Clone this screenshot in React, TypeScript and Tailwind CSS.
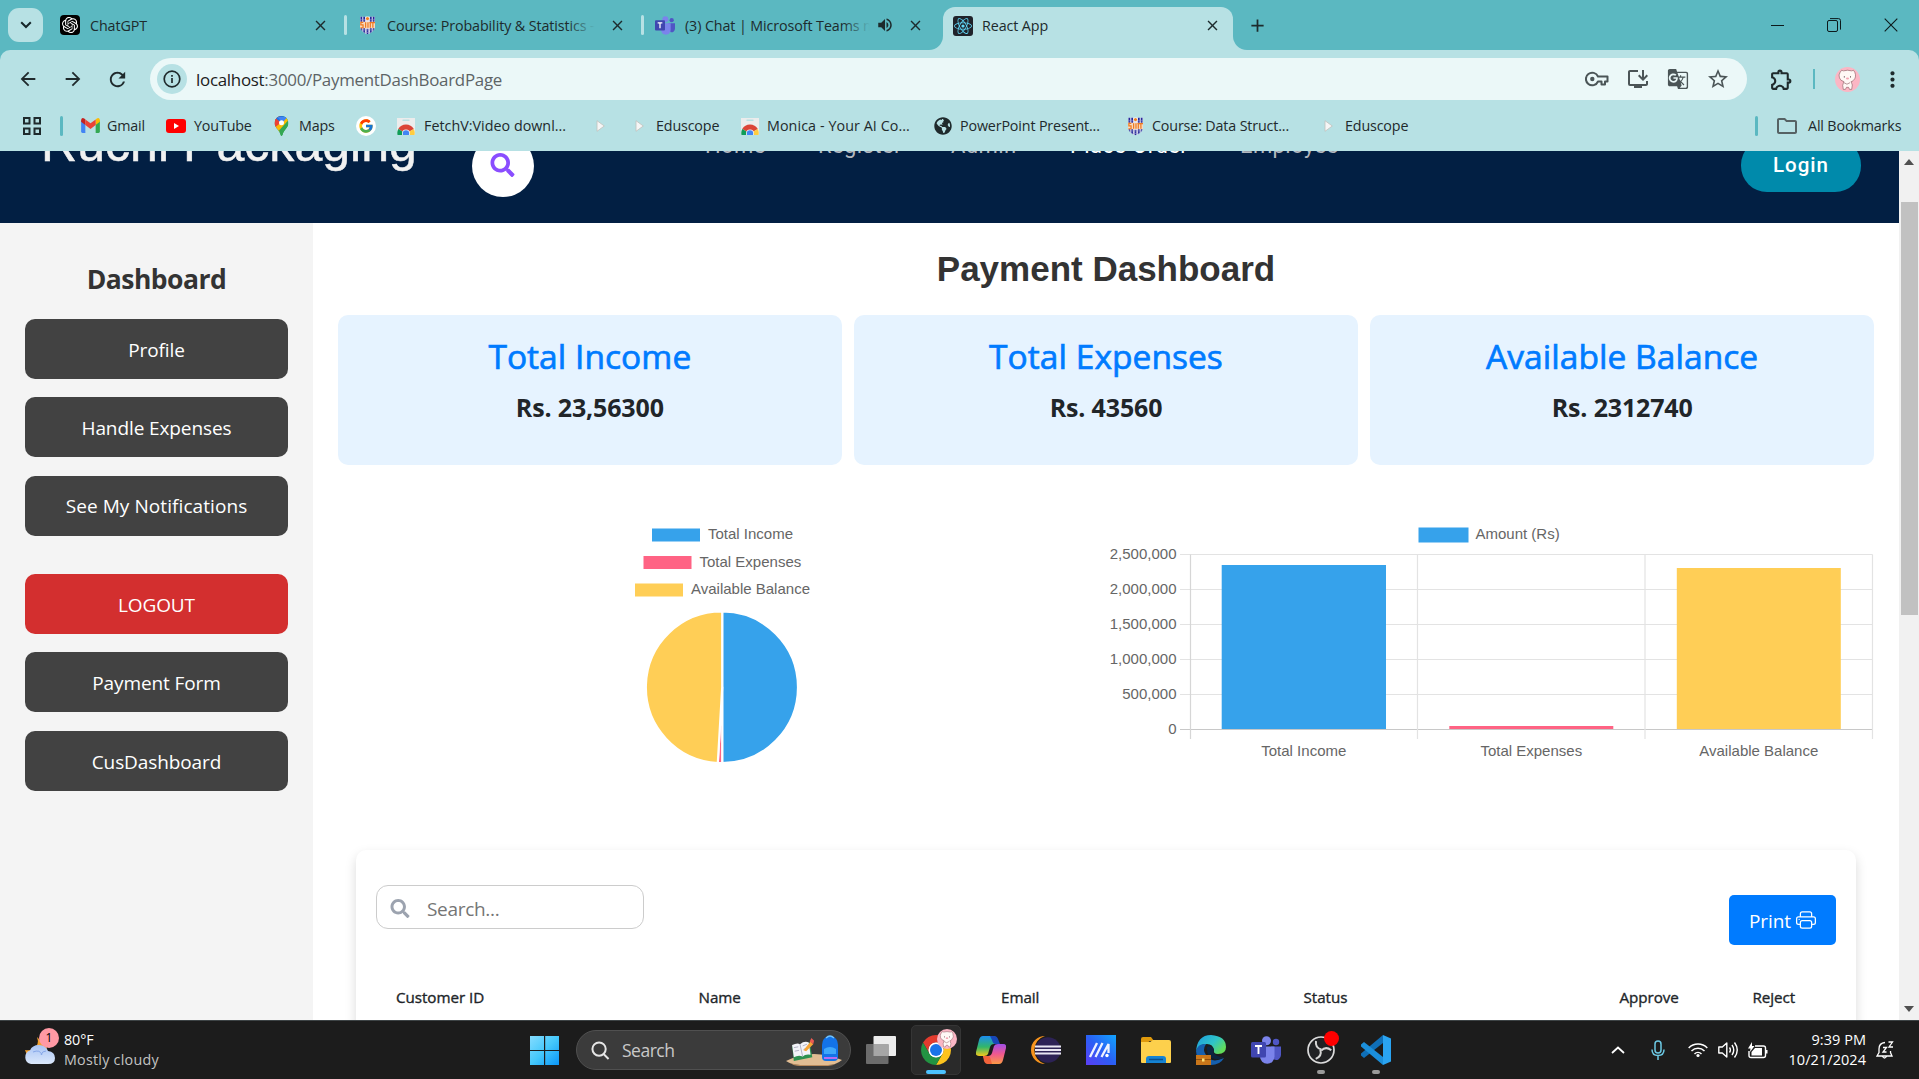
import React from "react";
import {
  MdArrowBack,
  MdArrowForward,
  MdRefresh,
  MdStarBorder,
  MdOutlineExtension,
  MdInstallDesktop,
  MdGTranslate,
  MdMoreVert,
  MdVolumeUp,
  MdClose,
  MdAdd,
  MdOutlineFolder,
} from "react-icons/md";
import { FaSearch, FaReact, FaGlobeAmericas } from "react-icons/fa";
import { BsPrinter } from "react-icons/bs";
import { SiOpenai } from "react-icons/si";
import { FcGoogle } from "react-icons/fc";

/* ---------- small drawings ---------- */

function ChromeLogo({ className }: { className: string }) {
  const arm = "M24 12H44.78A24 24 0 0 0 3.22 12L13.61 30A12 12 0 0 1 24 12Z";
  return (
    <svg viewBox="0 0 48 48" className={className}>
      <circle cx="24" cy="24" r="12" fill="#fff" />
      <path d={arm} fill="#e33b2e" />
      <path d={arm} fill="#fcc31e" transform="rotate(120 24 24)" />
      <path d={arm} fill="#229342" transform="rotate(240 24 24)" />
      <circle cx="24" cy="24" r="12" fill="#fff" />
      <circle cx="24" cy="24" r="9.6" fill="#1a73e8" />
    </svg>
  );
}

function WebStore() {
  return (
    <svg viewBox="0 0 20 20" className="h-[20px] w-[20px]">
      <path d="M1 2h18v15.500q0 1.500-1.500 1.500h-15q-1.500 0-1.500-1.500z" fill="#ececec" />
      <path d="M7 4.200h6" stroke="#b7e1e4" strokeWidth="1.400" strokeLinecap="round" />
      <clipPath id="ws"><path d="M1 2h18v17H1z" /></clipPath>
      <g clipPath="url(#ws)">
        <path d="M10 17.500L2.200 13A9 9 0 0 1 17.800 13z" fill="#db4437" />
        <path d="M10 17.500L2.200 13A9 9 0 0 0 3 22z" fill="#0f9d58" />
        <path d="M10 17.500L17.800 13A9 9 0 0 1 17 22z" fill="#ffcd40" />
        <circle cx="10" cy="17.500" r="4" fill="#f1f1f1" />
        <circle cx="10" cy="17.500" r="3.200" fill="#4285f4" />
      </g>
    </svg>
  );
}

function Crest() {
  return (
    <svg viewBox="0 0 18 20" className="h-[20px] w-[17px]">
      <clipPath id="crest"><path d="M1 1h16v12q-2 5-8 7q-6-2-8-7z" /></clipPath>
      <g clipPath="url(#crest)">
        <rect width="18" height="20" fill="#e8e8f2" />
        <path d="M2.500 0v20M5.500 0v20M12.500 0v20M15.500 0v20M9 14v6" stroke="#25299a" strokeWidth="1.900" />
        <path d="M0 4.500h18M0 15.200h18M0 17.800h18" stroke="#9a9cd0" strokeWidth=".7" />
        <rect x="7" y="0" width="4" height="5" fill="#fff" />
        <circle cx="9" cy="3.200" r="1.700" fill="#f08020" />
        <rect y="6.500" width="18" height="7" fill="#f8d9bd" />
        <path d="M4.500 7.300H2v2.600h2.300v3H1.500M7 7v6M9.500 7v6M12 7v6M11 7.500h6M14.700 7v6" stroke="#ee7a22" strokeWidth="1.300" fill="none" />
      </g>
    </svg>
  );
}

function TeamsLogo({ className }: { className: string }) {
  return (
    <svg viewBox="0 0 30 28" className={className}>
      <circle cx="25" cy="6" r="3.200" fill="#4f56c4" />
      <path d="M20 10.500h10v8.500a5 5 0 0 1-7 4.600z" fill="#4f56c4" />
      <circle cx="15.500" cy="4.700" r="4.500" fill="#7b83eb" />
      <path d="M9 10.500h14.500v10a7.250 7.250 0 0 1-14.500 0z" fill="#7b83eb" />
      <rect x="0" y="6" width="15" height="15.500" rx="1.500" fill="#4046b0" />
      <path d="M4 10h7M7.500 10v8" stroke="#fff" strokeWidth="1.900" />
    </svg>
  );
}

function Triangle() {
  return (
    <svg viewBox="0 0 9 12" className="h-[12px] w-[9px]">
      <path d="M1 .7L8.300 6 1 11.300z" fill="#f6f6f6" stroke="#c2c2bd" strokeWidth=".8" />
    </svg>
  );
}

function Pig({ className }: { className: string }) {
  return (
    <svg viewBox="0 0 24 24" className={className}>
      <circle cx="12" cy="12" r="12" fill="#fbb6c4" />
      <path d="M5 5q1-3 3.200-1.300Q12 2.500 16 3.700q2-1.700 3 1.300 2 5-1.500 8-1 1-2 1 2 3 .5 7.500h-2l-1-2h-2l-1 2H8q-1.500-4 .5-7.500-3-.5-4.200-3.500T5 5z" fill="#fff8f5" stroke="#8a5a60" strokeWidth=".6" />
      <path d="M8.500 9.500h.8M14.500 9.500h.8" stroke="#443036" strokeWidth="1.200" />
      <ellipse cx="12" cy="11" rx="1.500" ry="1" fill="#f5a7b5" />
      <path d="M8.500 15l3 1.500 3-1.500" stroke="#8a5a60" strokeWidth=".6" fill="none" />
    </svg>
  );
}

function Gmail() {
  return (
    <svg viewBox="0 0 20 16" className="h-[15px] w-[19px]">
      <path d="M0 2.500V14.500q0 1.500 1.400 1.500H4.500V6z" fill="#4285f4" />
      <path d="M20 2.500V14.500q0 1.500-1.400 1.500H15.500V6z" fill="#34a853" />
      <path d="M15.500 1.500v6L20 4V2q-.6-2.800-3.300-1.500z" fill="#fbbc04" />
      <path d="M4.500 1.500v6L0 4V2Q.6-.8 3.300.5z" fill="#c5221f" />
      <path d="M4.500 7.500V1.500L10 5.700l5.500-4.200v6L10 11.700z" fill="#ea4335" />
    </svg>
  );
}

function MapsPin() {
  return (
    <svg viewBox="0 0 14 20" className="h-[20px] w-[15px]">
      <clipPath id="pin"><path d="M7 0a7 7 0 0 1 7 7c0 4.500-4.800 6.500-6 12q-1 2-2 0C4.800 13.500 0 11.500 0 7a7 7 0 0 1 7-7z" /></clipPath>
      <g clipPath="url(#pin)">
        <rect width="14" height="20" fill="#34a853" />
        <path d="M0 0h8L2 8 0 10z" fill="#ea4335" />
        <path d="M0 2l2 0 5 5-5 6-3-2z" fill="#ea4335" />
        <path d="M2 0h12L7 7 1.500 2.500z" fill="#1a73e8" />
        <path d="M14 5L5 16 1 11 12 2z" fill="#fbbc04" />
        <path d="M14 4v9L7 20 4.500 14.500z" fill="#34a853" />
        <path d="M3 1h9.500L8 7z" fill="#4285f4" />
      </g>
      <circle cx="7" cy="6.800" r="2.500" fill="#fff" />
    </svg>
  );
}

/* ---------- browser chrome ---------- */

function TabBar() {
  return (
    <div className="flex h-[50px] items-center bg-[#5bb8c1] text-[14.300px] tracking-[-0.1px] text-[#1d2b2d]">
      <div className="ml-[8px] flex h-[34px] w-[35px] items-center justify-center rounded-[11px] bg-[#b7e1e4]">
        <svg viewBox="0 0 12 8" className="h-[8px] w-[12px]">
          <path d="M1.200 1.200L6 6l4.800-4.800" fill="none" stroke="#16272a" strokeWidth="2" />
        </svg>
      </div>
      <div className="flex w-[301px] items-center pl-[17px]">
        <span className="flex h-[20px] w-[20px] items-center justify-center rounded-[4px] bg-black">
          <SiOpenai className="h-[16px] w-[16px] text-white" />
        </span>
        <span className="ml-[10px] w-[222px] pt-px">ChatGPT</span>
        <MdClose className="h-[17px] w-[17px]" />
      </div>
      <div className="h-[20px] w-[3px] rounded bg-[#b7e1e4]" />
      <div className="flex w-[294px] items-center pl-[12px]">
        <Crest />
        <span className="relative ml-[11px] w-[208px] overflow-hidden whitespace-nowrap pt-px">
          Course: Probability &amp; Statistics -
          <span className="absolute right-0 top-0 h-full w-[28px] bg-linear-to-r from-transparent to-[#5bb8c1]" />
        </span>
        <MdClose className="ml-[14px] h-[17px] w-[17px]" />
      </div>
      <div className="h-[20px] w-[3px] rounded bg-[#b7e1e4]" />
      <div className="flex w-[299px] items-center pl-[11px]">
        <TeamsLogo className="h-[19px] w-[20px]" />
        <span className="relative ml-[10px] w-[185px] overflow-hidden whitespace-nowrap pt-px">
          (3) Chat | Microsoft Teams meeting
          <span className="absolute right-0 top-0 h-full w-[28px] bg-linear-to-r from-transparent to-[#5bb8c1]" />
        </span>
        <MdVolumeUp className="ml-[6px] h-[18px] w-[18px]" />
        <MdClose className="ml-[13px] h-[17px] w-[17px]" />
      </div>
      <div className="relative mt-[7px] flex h-[43px] w-[290px] items-center rounded-t-[12px] bg-[#b7e1e4] pb-[6px] pl-[10px]">
        <span className="absolute bottom-0 left-[-14px] h-[14px] w-[14px] bg-[#b7e1e4]">
          <span className="block h-full w-full rounded-br-[14px] bg-[#5bb8c1]" />
        </span>
        <span className="absolute bottom-0 right-[-14px] h-[14px] w-[14px] bg-[#b7e1e4]">
          <span className="block h-full w-full rounded-bl-[14px] bg-[#5bb8c1]" />
        </span>
        <span className="flex h-[20px] w-[20px] items-center justify-center rounded-[3px] bg-[#20232a]">
          <FaReact className="h-[18px] w-[18px] text-[#61dafb]" />
        </span>
        <span className="ml-[9px] w-[222px]">React App</span>
        <MdClose className="h-[17px] w-[17px]" />
      </div>
      <MdAdd className="ml-[14px] h-[21px] w-[21px]" />
      <div className="ml-auto flex items-center gap-[43px] pr-[21px]">
        <span className="h-px w-[13px] bg-[#0c1a1c]" />
        <svg viewBox="0 0 14 14" className="h-[14px] w-[14px]" fill="none" stroke="#0c1a1c">
          <rect x=".5" y="2.500" width="10" height="11" rx="1.500" />
          <path d="M3 .6h8.500q2 0 2 2v9" />
        </svg>
        <svg viewBox="0 0 14 14" className="h-[14px] w-[14px]" fill="none" stroke="#0c1a1c" strokeWidth="1.100">
          <path d="M.7.7l12.600 12.600M13.300.7L.7 13.300" />
        </svg>
      </div>
    </div>
  );
}

function AddressBar() {
  return (
    <div className="bg-[#5bb8c1]">
      <div className="flex h-[50px] items-center rounded-t-[10px] bg-[#b7e1e4] pt-[8px] text-[#1f2a2c]">
        <MdArrowBack className="ml-[17px] h-[22px] w-[22px]" />
        <MdArrowForward className="ml-[23px] h-[22px] w-[22px]" />
        <MdRefresh className="ml-[22px] h-[23px] w-[23px]" />
        <div className="ml-[21px] flex h-[42px] w-[1597px] items-center rounded-full bg-[#ebf8f8] pl-[7px]">
          <span className="flex h-[30px] w-[30px] items-center justify-center rounded-full bg-[#b7e1e4]">
            <svg viewBox="0 0 18 18" className="h-[18px] w-[18px]" fill="none" stroke="#1f2a2c" strokeWidth="1.700">
              <circle cx="9" cy="9" r="7.800" />
              <path d="M9 8v5M9 5v1.700" />
            </svg>
          </span>
          <span className="ml-[9px] w-[1389px] pt-[2px] text-[16.900px] tracking-[-0.27px] text-[#5d6466]">
            <span className="text-[#1b2021]">localhost</span>:3000/PaymentDashBoardPage
          </span>
          <svg viewBox="0 0 24 16" className="h-[16px] w-[24px]" fill="none" stroke="#4b5557" strokeWidth="2">
            <path d="M13 5.500a6.300 6.300 0 1 0 0 5h3.500v3h3.500v-3h2.500v-5z" strokeLinejoin="round" />
            <circle cx="7.300" cy="8" r="2.200" fill="#4b5557" stroke="none" />
          </svg>
          <MdInstallDesktop className="ml-[17px] h-[24px] w-[24px] text-[#4b5557]" />
          <MdGTranslate className="ml-[17px] h-[22px] w-[22px] text-[#4b5557]" />
          <MdStarBorder className="ml-[17px] h-[24px] w-[24px] text-[#4b5557]" />
        </div>
        <MdOutlineExtension className="ml-[22px] h-[25px] w-[25px]" />
        <span className="ml-[19px] h-[20px] w-[2px] bg-[#5bb8c1]" />
        <Pig className="ml-[20px] h-[25px] w-[25px]" />
        <MdMoreVert className="ml-[20px] h-[25px] w-[25px]" />
      </div>
    </div>
  );
}

function Mark({ icon, label, className, gap }: { icon: React.ReactNode; label?: string; className: string; gap?: string }) {
  return (
    <div className={`flex shrink-0 items-center whitespace-nowrap ${className}`}>
      <span className="flex w-[20px] shrink-0 items-center justify-center">{icon}</span>
      {label && <span className={gap ?? "ml-[8px]"}>{label}</span>}
    </div>
  );
}

function BookmarksBar() {
  return (
    <div className="flex h-[51px] items-center bg-[#b7e1e4] text-[14.300px] tracking-[-0.15px] text-[#1f2a2c]">
      <svg viewBox="0 0 18 18" className="ml-[23px] h-[18px] w-[18px]" fill="none" stroke="#1f2a2c" strokeWidth="2">
        <path d="M1 1h5.500v5.500H1zM11.500 1H17v5.500h-5.500zM1 11.500h5.500V17H1zM11.500 11.500H17V17h-5.500z" />
      </svg>
      <span className="ml-[19px] h-[20px] w-[3px] rounded bg-[#5bb8c1]" />
      <Mark className="ml-[17px] w-[86px]" icon={<Gmail />} label="Gmail" gap="ml-[7px]" />
      <Mark
        className="w-[105px]"
        icon={
          <svg viewBox="0 0 20 14" className="h-[14px] w-[20px]">
            <rect width="20" height="14" rx="3" fill="#f00" />
            <path d="M8 4l5 3-5 3z" fill="#fff" />
          </svg>
        }
        label="YouTube"
      />
      <Mark className="w-[85px]" icon={<MapsPin />} label="Maps" />
      <Mark
        className="w-[40px]"
        icon={
          <span className="flex h-[20px] w-[20px] items-center justify-center rounded-full bg-white">
            <FcGoogle className="h-[16px] w-[16px]" />
          </span>
        }
      />
      <Mark className="w-[194px] tracking-[0.02px]" icon={<WebStore />} label="FetchV:Video downl..." />
      <Mark className="w-[39px]" icon={<Triangle />} />
      <Mark className="w-[111px]" icon={<Triangle />} label="Eduscope" gap="ml-[7px]" />
      <Mark className="w-[193px] tracking-[0.08px]" icon={<WebStore />} label="Monica - Your AI Co..." gap="ml-[7px]" />
      <Mark className="w-[192px]" icon={<FaGlobeAmericas className="h-[18px] w-[18px]" />} label="PowerPoint Present..." gap="ml-[7px]" />
      <Mark className="w-[193px]" icon={<Crest />} label="Course: Data Struct..." gap="ml-[7px]" />
      <Mark className="w-[111px]" icon={<Triangle />} label="Eduscope" gap="ml-[7px]" />
      <span className="ml-auto h-[20px] w-[3px] rounded bg-[#5bb8c1]" />
      <Mark
        className="ml-[19px] w-[142px]"
        icon={<MdOutlineFolder className="h-[24px] w-[24px] shrink-0 text-[#566264]" />}
        label="All Bookmarks"
        gap="ml-[11px]"
      />
    </div>
  );
}

/* ---------- page ---------- */

function SiteNav() {
  return (
    <div className="h-[72px] overflow-hidden bg-[#021f43]">
      <div className="-mt-[50px] flex items-start whitespace-nowrap font-['Roboto']">
        <span className="ml-[41px] mt-[13px] w-[431px] font-['Liberation_Sans'] text-[50px] leading-[60px] tracking-[0.05px] text-[#f1f1f1] [-webkit-text-stroke:0.5px_#f1f1f1]">
          Ruchi Packaging
        </span>
        <span className="mt-[34px] flex h-[62px] w-[62px] items-center justify-center rounded-full bg-white">
          <FaSearch className="mb-[2px] mr-[2px] h-[24px] w-[25px] text-[#8a4dff]" />
        </span>
        <div className="ml-[171px] mt-[30px] flex text-[22px] leading-[30px] tracking-[0.4px] text-[#b3b7bf]">
          <span className="w-[113px]">Home</span>
          <span className="w-[133px]">Register</span>
          <span className="w-[119px]">Admin</span>
          <span className="w-[170px] text-white">Place Order</span>
          <span>Employee</span>
        </div>
        <span className="ml-auto mr-[38px] mt-[38px] flex h-[53px] w-[120px] items-center justify-center rounded-[26px] bg-[#008aab] text-[20.500px] font-medium tracking-[1px] text-white">
          Login
        </span>
      </div>
    </div>
  );
}

const sideButton =
  "flex h-[60px] w-[263px] items-center justify-center rounded-[10px] bg-[#424242] pt-[2px] text-[19px] tracking-[-0.1px] text-white";

function Sidebar() {
  return (
    <div className="flex w-[313px] shrink-0 flex-col items-center bg-[#f4f4f4] pt-[39px]">
      <h2 className="mb-[22px] text-[26.500px] font-bold leading-[35px] tracking-[-0.5px] text-[#333]">Dashboard</h2>
      <div className="flex flex-col gap-[18.300px]">
        <div className={sideButton}>Profile</div>
        <div className={sideButton}>Handle Expenses</div>
        <div className={sideButton}><span className="tracking-[0.08px]">See My Notifications</span></div>
      </div>
      <div className="mt-[38.400px] flex flex-col gap-[18.400px]">
        <div className="flex h-[60px] w-[263px] items-center justify-center rounded-[10px] bg-[#d32f2f] pt-[2px] text-[19px] tracking-[-0.1px] text-white">
          LOGOUT
        </div>
        <div className={sideButton}>Payment Form</div>
        <div className={sideButton}>CusDashboard</div>
      </div>
    </div>
  );
}

function SummaryCard({ title, value }: { title: string; value: string }) {
  return (
    <div className="h-[150px] rounded-[10px] bg-[#e6f3ff] pt-[20px] text-center">
      <h3 className="text-[33.500px] leading-[43px] tracking-[0.05px] text-[#007bff] [-webkit-text-stroke:0.7px_#007bff]">{title}</h3>
      <p className="mt-[11px] text-[25px] font-bold leading-[37px] tracking-[-0.15px] text-[#212529]">{value}</p>
    </div>
  );
}

function PieChart() {
  const rows = [
    { x: 652, y: 528.5, label: "Total Income", fill: "#36a2eb" },
    { x: 643.5, y: 556, label: "Total Expenses", fill: "#ff6384" },
    { x: 635, y: 583.5, label: "Available Balance", fill: "#ffce56" },
  ];
  return (
    <svg viewBox="338 465 768 385" className="h-[385px] w-[768px] shrink-0 font-['Liberation_Sans']">
      {rows.map((r) => (
        <g key={r.label}>
          <rect x={r.x} y={r.y} width="48" height="13" fill={r.fill} />
          <text x={r.x + 56} y={r.y + 10.8} fontSize="15" fill="#666">{r.label}</text>
        </g>
      ))}
      <g stroke="#fff" strokeWidth="2.200" strokeLinejoin="round">
        <path d="M722.200 687.300V611.500A75.800 75.800 0 0 1 722.200 763.100Z" fill="#36a2eb" />
        <path d="M722.200 687.300V763.100A75.800 75.800 0 0 1 717.800 763Z" fill="#ff6384" />
        <path d="M722.200 687.300L717.800 763A75.800 75.800 0 0 1 722.200 611.500Z" fill="#ffce56" />
      </g>
    </svg>
  );
}

function BarChart() {
  const ticks = ["2,500,000", "2,000,000", "1,500,000", "1,000,000", "500,000", "0"];
  return (
    <svg viewBox="1106 465 768 385" className="h-[385px] w-[768px] shrink-0 font-['Liberation_Sans']">
      <rect x="1418.500" y="527.500" width="50" height="15" fill="#36a2eb" />
      <text x="1475.500" y="539.300" fontSize="15" fill="#666">Amount (Rs)</text>
      {ticks.map((t, i) => (
        <g key={t}>
          <path d={`M1180 ${554.5 + i * 35}H1872.5`} stroke={i === 5 ? "#c8c8c8" : "#e3e3e3"} strokeWidth="1.200" />
          <text x="1176.500" y={558.8 + i * 35} fontSize="15" fill="#666" textAnchor="end">{t}</text>
        </g>
      ))}
      <path d="M1417.500 554.500V739M1645 554.500V739M1872.500 554.500V739" stroke="#e3e3e3" strokeWidth="1.200" />
      <path d="M1190.500 554.500V739" stroke="#d6d6d6" strokeWidth="1.200" />
      <rect x="1221.700" y="565" width="164.300" height="164" fill="#36a2eb" />
      <rect x="1449.300" y="726" width="164" height="3" fill="#ff6384" />
      <rect x="1676.800" y="568" width="164" height="161" fill="#ffce56" />
      <g fontSize="15" fill="#666" textAnchor="middle">
        <text x="1303.800" y="756.300">Total Income</text>
        <text x="1531.300" y="756.300">Total Expenses</text>
        <text x="1758.800" y="756.300">Available Balance</text>
      </g>
    </svg>
  );
}

function CustomerTable() {
  return (
    <div className="mx-[18px] h-[220px] rounded-[10px] bg-white px-[20px] shadow-[0_5px_12px_rgba(0,0,0,0.15)]">
      <div className="flex justify-between">
        <div className="mt-[35px] flex h-[44px] w-[268px] items-center rounded-[12px] border border-[#ccc] pl-[13px]">
          <FaSearch className="mt-[2px] h-[19px] w-[20px] text-[#9ca3af]" />
          <span className="ml-[17px] mt-[5px] text-[19px] tracking-[-0.3px] text-[#757575]">Search...</span>
        </div>
        <div className="mt-[45px] flex h-[50px] w-[107px] items-center justify-center gap-[5px] rounded-[5px] bg-[#007bff] text-[19px] tracking-[-0.1px] text-white">
          <span className="pt-[2px]">Print</span> <BsPrinter className="h-[20px] w-[20px]" />
        </div>
      </div>
      <div className="mt-[41px] flex pl-[20px] text-[15.200px] leading-[22px] tracking-[-0.05px] text-[#212529] [-webkit-text-stroke:0.35px_#212529]">
        <span className="w-[302.500px]">Customer ID</span>
        <span className="w-[302.500px]">Name</span>
        <span className="w-[302.500px]">Email</span>
        <span className="w-[316px]">Status</span>
        <span className="w-[133px]">Approve</span>
        <span>Reject</span>
      </div>
    </div>
  );
}

function ScrollBar() {
  return (
    <div className="flex w-[20px] shrink-0 flex-col items-center bg-[#f1f1f1]">
      <svg viewBox="0 0 10 6" className="mt-[8px] h-[6px] w-[10px]"><path d="M5 0l5 6H0z" fill="#505050" /></svg>
      <div className="mt-[37px] h-[413px] w-[17px] bg-[#c1c1c1]" />
      <svg viewBox="0 0 10 6" className="mb-[8px] mt-auto h-[6px] w-[10px]"><path d="M5 6l5-6H0z" fill="#505050" /></svg>
    </div>
  );
}

/* ---------- taskbar ---------- */

function Cell({ children, active, running }: { children: React.ReactNode; active?: boolean; running?: boolean }) {
  return (
    <div className={active ? "relative flex h-[50px] w-[50px] items-center justify-center rounded-[5px] border border-[#353535] bg-[#2a2a2a]" : "relative flex h-[50px] w-[50px] items-center justify-center"}>
      {children}
      {active && <span className="absolute bottom-0 h-[4px] w-[20px] rounded-full bg-[#4cc2ff]" />}
      {running && <span className="absolute bottom-[1px] h-[4px] w-[8px] rounded-full bg-[#9a9a9a]" />}
    </div>
  );
}

function Taskbar() {
  return (
    <div className="relative flex h-[59px] items-center border-t border-[#3d4345] bg-[#1c1c1c] text-white">
      <div className="flex w-[530px] items-center">
        <div className="relative ml-[24px] h-[44px] w-[36px]">
          <svg viewBox="0 0 36 44" className="h-[44px] w-[36px]">
            <defs>
              <linearGradient id="cl" x1="0" y1="0" x2="0" y2="1">
                <stop offset="0" stopColor="#a9c4f5" />
                <stop offset="1" stopColor="#dbe8fb" />
              </linearGradient>
            </defs>
            <path d="M13 9q3 8-4 12-4 2-8 1 2 9 12 9 9-1 10-12z" fill="#f0a030" />
            <path d="M7 36a7 7 0 0 1-1-13.500Q8 17 15 17q7 0 9 6 7 1 7 7t-7 6z" fill="url(#cl)" />
            <path d="M9 24q7-3 9 3M22 23q-4 0-5 4" stroke="#86a7e8" strokeWidth="1" fill="none" />
          </svg>
          <span className="absolute left-[15px] top-[0px] flex h-[20px] w-[20px] items-center justify-center rounded-full bg-[#ff99a4] text-[12px] text-black">1</span>
        </div>
        <div className="ml-[4px] text-[14.300px] leading-[20px] tracking-[-0.1px]">
          <div>80°F</div>
          <div className="tracking-[0.25px] text-[#c3c3c3]">Mostly cloudy</div>
        </div>
      </div>
      <svg viewBox="0 0 30 30" className="h-[30px] w-[30px]">
        <defs>
          <linearGradient id="win" x1="0" y1="0" x2="1" y2="1">
            <stop offset="0" stopColor="#85dcff" />
            <stop offset=".5" stopColor="#45c8fb" />
            <stop offset="1" stopColor="#0a96f8" />
          </linearGradient>
        </defs>
        <path d="M0 1h14v14H0zM15.200 1H29v14H15.200zM0 16h14v14H0zM15.200 16H29v14H15.200z" fill="url(#win)" />
      </svg>
      <div className="ml-[16px] flex h-[40px] w-[275px] items-center rounded-full border border-[#505050] bg-[#3b3b3b] pl-[14px]">
        <svg viewBox="0 0 20 20" className="h-[19px] w-[19px]" fill="none" stroke="#e6e6e6" strokeWidth="2.100">
          <circle cx="8.500" cy="8.500" r="7" />
          <path d="M13.500 14l5 5" />
        </svg>
        <span className="ml-[12px] w-[164px] text-[17.500px] tracking-[-0.5px] text-[#c9c9c9]">Search</span>
        <svg viewBox="0 0 56 32" className="h-[32px] w-[56px] shrink-0">
          <path d="M0 27Q14 20 28 20t28 6q-6 5-14 5H14Q6 31 0 27z" fill="#e2bd93" />
          <path d="M4 29q8 2 13 2h24q7 0 11-2-5 3-10 3H14q-6 0-10-3z" fill="#b98a5c" />
          <g transform="translate(.8 4) scale(.88)">
            <path d="M6 9l20-4 3 17-21 4z" fill="#2e9150" />
            <path d="M6 8q6-3 9-1 5-4 10-2l2 14q-6-1-9 2-5-2-10 1z" fill="#f3f3f8" />
            <path d="M15 7l3 14M8 11l5-1M9 15l5-1M18 9l5-2M19 13l5-2" stroke="#a9a9bd" strokeWidth="1" />
            <path d="M19 14l8-10 3 3-8 8z" fill="#f6a436" />
            <path d="M26 4l2-4 3 3-1 4z" fill="#ec5b53" />
          </g>
          <path d="M36 11q0-8 8-9 8 1 8 9v12q0 4-4 4h-8q-4 0-4-4z" fill="#1373e8" />
          <path d="M38 15q6-4 12 0v5H38z" fill="#3ea7fa" />
          <path d="M40 4q4-4 8 0" stroke="#6ec2ff" strokeWidth="1.500" fill="none" />
          <path d="M38 24h13" stroke="#b66cf0" strokeWidth="2" />
        </svg>
      </div>
      <div className="ml-[5px] flex gap-[5px]">
        <Cell>
          <svg viewBox="0 0 30 28" className="h-[28px] w-[30px]">
            <rect x="7.500" y="0" width="22.500" height="20" rx="1" fill="#ececec" />
            <rect x="0" y="8" width="22.500" height="20" rx="1" fill="#6c6c6c" />
            <path d="M7.500 8h15v12h-15z" fill="#a6a6a6" />
          </svg>
        </Cell>
        <Cell active>
          <ChromeLogo className="h-[30px] w-[30px]" />
          <Pig className="absolute left-[25px] top-[3px] h-[20px] w-[20px]" />
        </Cell>
        <Cell>
          <svg viewBox="0 0 30 28" className="h-[28px] w-[30px]">
            <defs>
              <linearGradient id="cp1" x1="0" y1="0" x2="0" y2="1">
                <stop offset="0" stopColor="#1b8df0" />
                <stop offset=".55" stopColor="#32b768" />
                <stop offset="1" stopColor="#f5c91c" />
              </linearGradient>
              <linearGradient id="cp2" x1="0" y1="0" x2="0" y2="1">
                <stop offset="0" stopColor="#a14fe8" />
                <stop offset=".5" stopColor="#f0588f" />
                <stop offset="1" stopColor="#fb9a44" />
              </linearGradient>
            </defs>
            <path d="M7 0h10q3 0 4 3l2 5h-5q-3 0-4 3l-2 7q-1 2-4 2H3q-4 0-3-4L3 4q1-4 4-4z" fill="url(#cp1)" />
            <path d="M14 0h4q3 0 4 3l2 5h-5q-2 0-3-4z" fill="#1747b8" />
            <path d="M23 28H13q-3 0-4-3l-2-5h5q3 0 4-3l2-7q1-2 4-2h5q4 0 3 4l-3 12q-1 4-4 4z" fill="url(#cp2)" />
            <path d="M16 28h-4q-3 0-4-3l-1-5h5q2 0 2.500 3z" fill="#f2633b" />
          </svg>
        </Cell>
        <Cell>
          <svg viewBox="0 0 30 28" className="h-[28px] w-[30px]">
            <path d="M14 0A14 14 0 0 0 14 28 14.500 14.500 0 0 1 14 0z" fill="#f7941e" />
            <circle cx="17" cy="14" r="12.800" fill="#2c2255" />
            <path d="M4 10.500h26M4 14h26M4 17.500h26" stroke="#e8e6f2" strokeWidth="2" />
          </svg>
        </Cell>
        <Cell>
          <svg viewBox="0 0 30 30" className="h-[30px] w-[30px]">
            <defs>
              <linearGradient id="ms" x1="0" y1="1" x2="1" y2="0">
                <stop offset="0" stopColor="#5b3df5" />
                <stop offset=".5" stopColor="#2a60f5" />
                <stop offset="1" stopColor="#11a5ff" />
              </linearGradient>
            </defs>
            <rect width="30" height="30" fill="url(#ms)" />
            <path d="M4 22L11 8M9.500 22L16.500 8M15.500 22L22.500 9V18" stroke="#eef2ff" strokeWidth="2.300" fill="none" />
            <circle cx="21" cy="20.500" r="1.700" fill="#fff" />
          </svg>
        </Cell>
        <Cell>
          <svg viewBox="0 0 30 26" className="h-[26px] w-[30px]">
            <path d="M0 2q0-2 2-2h8l3 4h-4l-3 2H0z" fill="#e09a0c" />
            <path d="M0 5h9l3-2h16q2 0 2 2v20q0 1-1 1H1q-1 0-1-1z" fill="#fdd04c" />
            <path d="M5 26v-4q0-3 3-3h14q3 0 3 3v4z" fill="#1583d3" />
            <path d="M8 22.500h14" stroke="#0b4f8c" strokeWidth="1.500" />
          </svg>
        </Cell>
        <Cell>
          <svg viewBox="0 0 30 30" className="h-[30px] w-[30px]">
            <defs>
              <linearGradient id="ed" x1="0" y1="0" x2="1" y2=".6">
                <stop offset="0" stopColor="#1c9be0" />
                <stop offset=".6" stopColor="#2fc4c8" />
                <stop offset="1" stopColor="#63dc5a" />
              </linearGradient>
            </defs>
            <path d="M0 17Q1 0 15 0q15 1 15 12 0 7-8 7-5 0-4-4-1-6-7-6Q2 9 0 17z" fill="url(#ed)" />
            <path d="M0 16q2-8 10-7-4 6 0 11 5 9 18 3-4 7-13 7Q1 30 0 16z" fill="#155fae" />
            <path d="M11 12q4-2 7 2 0 2-1 3 2 5 11 5-4 3-9 2-9-2-8-12z" fill="#0d2540" />
            <rect x="0" y="20" width="15" height="10" fill="#c9761a" />
            <path d="M0 24.500h15" stroke="#8f4e0c" strokeWidth="1" />
            <rect x="6" y="23.500" width="2.500" height="3" fill="#fddf73" />
          </svg>
        </Cell>
        <Cell><TeamsLogo className="h-[28px] w-[30px]" /></Cell>
        <Cell running>
          <svg viewBox="0 0 28 28" className="h-[28px] w-[28px]">
            <circle cx="14" cy="14" r="13" fill="#202124" stroke="#dcdcdc" strokeWidth="1.700" />
            <g fill="none" stroke="#d5d5d5" strokeWidth="2">
              <path d="M14.500 13.500Q8 12 9 5" />
              <path d="M14.500 13.500Q8 12 9 5" transform="rotate(120 14 14)" />
              <path d="M14.500 13.500Q8 12 9 5" transform="rotate(240 14 14)" />
            </g>
          </svg>
          <span className="absolute left-[28px] top-[6px] h-[15px] w-[15px] rounded-full bg-[#f00]" />
        </Cell>
        <Cell running>
          <svg viewBox="0 0 30 30" className="h-[30px] w-[30px]">
            <path d="M22 0v8L3 23 0 20.500v-2z" fill="#0f6fb8" />
            <path d="M22 30v-8L3 7 0 9.500v2z" fill="#1b8fdb" />
            <path d="M22 0l8 3.500v23L22 30z" fill="#2aa4f2" />
          </svg>
        </Cell>
      </div>
      <div className="ml-auto flex items-center">
        <svg viewBox="0 0 14 8" className="h-[8px] w-[14px]"><path d="M1 7l6-5.500L13 7" fill="none" stroke="#fff" strokeWidth="1.800" /></svg>
        <svg viewBox="0 0 14 20" className="ml-[26px] h-[20px] w-[14px]" fill="none" stroke="#6cc9e4" strokeWidth="1.500">
          <rect x="4" y="1" width="6" height="12" rx="3" />
          <path d="M1 9.500q0 6 6 6t6-6M7 15.500V20" />
        </svg>
        <svg viewBox="0 0 20 16" className="ml-[23px] h-[16px] w-[20px]" fill="none" stroke="#fff" strokeWidth="1.500">
          <path d="M.7 6a13 13 0 0 1 18.600 0M3.500 9a9.300 9.300 0 0 1 13 0M6.500 12a5 5 0 0 1 7 0" />
          <circle cx="10" cy="13.500" r="1.600" fill="#fff" stroke="none" />
        </svg>
        <svg viewBox="0 0 20 18" className="ml-[10px] h-[18px] w-[20px]" fill="none" stroke="#fff" strokeWidth="1.400">
          <path d="M.8 6h3.500l4.500-4v14l-4.500-4H.8z" strokeLinejoin="round" />
          <path d="M11.500 6.500q1.800 2.500 0 5M14 4q3.500 5 0 10M16.500 1.500q5.500 7.500 0 15" />
        </svg>
        <svg viewBox="0 0 20 17" className="ml-[10px] h-[17px] w-[20px]" fill="none" stroke="#fff" strokeWidth="1.400">
          <path d="M7 4h8.500q2 0 2 2v7.500q0 2-2 2H3q-2 0-2-2V9" />
          <path d="M7 6h7v7.500H3.500V10z" fill="#fff" stroke="none" />
          <path d="M18 8h1.500v3.500H18z" fill="#fff" stroke="none" />
          <path d="M4 0L0 6.500h2.500L2 10l4.500-6H4z" fill="#fff" stroke="none" />
        </svg>
        <div className="ml-[17px] w-[81px] text-right text-[14.500px] leading-[20px] tracking-[0.05px]">
          <div>9:39 PM</div>
          <div className="whitespace-nowrap">10/21/2024</div>
        </div>
        <svg viewBox="0 0 18 19" className="ml-[10px] mr-[25px] h-[19px] w-[18px]" fill="none" stroke="#fff" strokeWidth="1.300">
          <path d="M9 1.500Q3 2 3 8v3.500L1 15h15l-1.500-3.500V10M6.500 15.500q2 3 4 0" />
          <path d="M7 6.500h3.500L7 11h3.500M12.500 1h4L13 6h4" />
        </svg>
      </div>
    </div>
  );
}

export default function App() {
  return (
    <div className="flex h-[1079px] w-[1919px] flex-col overflow-hidden bg-white font-['Open_Sans',sans-serif]">
      <TabBar />
      <AddressBar />
      <BookmarksBar />
      <div className="flex h-[869px] overflow-hidden">
        <div className="flex w-[1899px] flex-col">
          <SiteNav />
          <div className="flex h-[797px] overflow-hidden">
            <Sidebar />
            <main className="w-[1586px] px-[25px] pt-[25px]">
              <h1 className="mb-[25px] text-center font-['Liberation_Sans'] text-[35px] font-bold leading-[42px] text-[#333]">
                Payment Dashboard
              </h1>
              <div className="grid grid-cols-3 gap-[12.500px]">
                <SummaryCard title="Total Income" value="Rs. 23,56300" />
                <SummaryCard title="Total Expenses" value="Rs. 43560" />
                <SummaryCard title="Available Balance" value="Rs. 2312740" />
              </div>
              <div className="flex">
                <PieChart />
                <BarChart />
              </div>
              <CustomerTable />
            </main>
          </div>
        </div>
        <ScrollBar />
      </div>
      <Taskbar />
    </div>
  );
}
